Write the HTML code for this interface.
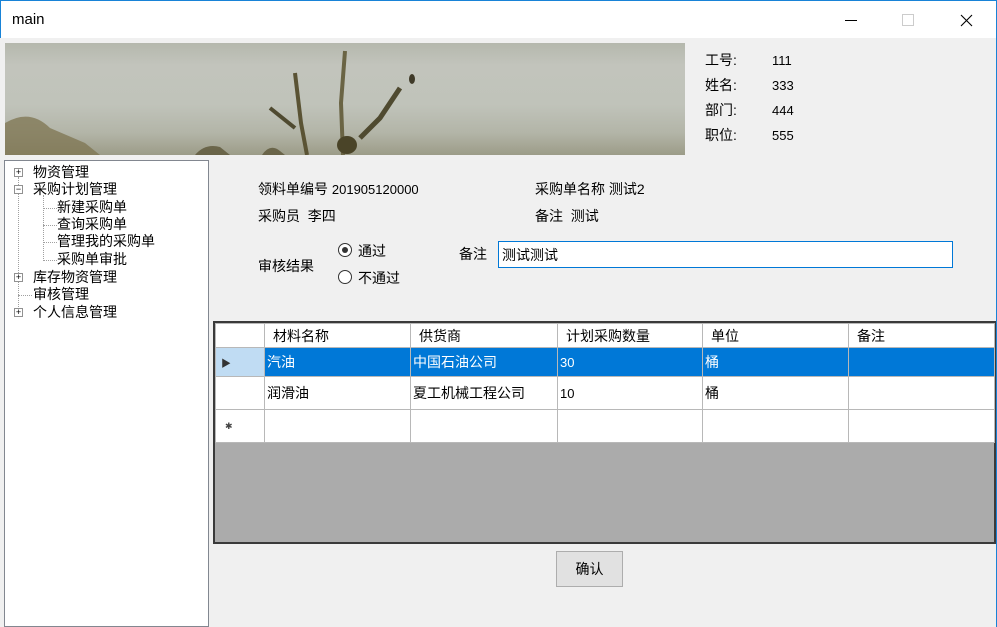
<!DOCTYPE html>
<html><head><meta charset="utf-8"><style>
*{margin:0;padding:0;box-sizing:border-box}
body{width:997px;height:627px;overflow:hidden;background:#f0f0f0;position:relative;font-family:"Liberation Sans","Noto Sans CJK SC",sans-serif;font-size:14px;color:#000}
.a{position:absolute;white-space:nowrap}
#title{left:0;top:0;width:997px;height:38px;background:#fff;border-top:1px solid #1883d7;border-left:1px solid #1883d7;border-right:1px solid #1883d7}
#pic{left:5px;top:43px;width:680px;height:112px;overflow:hidden;background:linear-gradient(180deg,#b5b8ad 0%,#c2c4bc 20%,#c0c3ba 55%,#b3b5a8 80%,#9c9c88 100%)}
.tree{left:4px;top:160px;width:205px;height:467px;background:#fff;border:1px solid #828790}
.ti{position:absolute;font-size:14px;line-height:17px}
.pm{position:absolute;width:9px;height:9px;border:1px solid #919191;background:#fff;font-size:9px;line-height:7px;text-align:center;color:#000}
.dot{position:absolute;border-color:#a0a0a0;border-style:dotted;border-width:0}
table{border-collapse:collapse;position:absolute;left:215px;top:323px;table-layout:fixed}
td{border:1px solid #b8b8b8;height:33px;padding:0 2px;font-size:14px;background:#fff;overflow:hidden}
tr.h td{height:24px;padding-left:8px}
tr.s td{background:#0078d7;color:#fff;height:29px}
</style></head><body>
<div class="a" id="title"><span class="a" style="left:11px;top:10px;font-size:15px">main</span>
<div class="a" style="left:844px;top:19px;width:12px;height:1px;background:#000"></div>
<div class="a" style="left:901px;top:13px;width:12px;height:12px;border:1px solid #ccc"></div>
<svg class="a" style="left:959px;top:13px" width="13" height="13"><path d="M1 1L12 12M12 1L1 12" stroke="#000" stroke-width="1.1"/></svg>
</div>
<div class="a" id="pic">
<svg width="680" height="112" style="position:absolute;left:0;top:0">
<path d="M0 80 Q25 65 45 85 L80 100 L95 112 L0 112Z" fill="#7d7450" opacity=".75"/>
<path d="M190 112 Q200 100 215 104 L225 112Z" fill="#5d5638" opacity=".8"/>
<path d="M257 112 Q265 100 275 108 L280 112Z" fill="#5d5638" opacity=".8"/>
<path d="M290 30 L296 80 L302 112" stroke="#5a5334" stroke-width="4" fill="none"/>
<path d="M340 8 L336 60 L338 112" stroke="#6a6444" stroke-width="4" fill="none"/>
<path d="M395 45 L375 75 L355 95" stroke="#4f4a30" stroke-width="5" fill="none"/>
<path d="M265 65 L290 85" stroke="#4f4a30" stroke-width="4" fill="none"/>
<ellipse cx="342" cy="102" rx="10" ry="9" fill="#4a4428"/>
<ellipse cx="407" cy="36" rx="3" ry="5" fill="#3f3a28"/>
</svg></div>
<div class="a" style="left:705px;top:48px;line-height:25px">工号:<br>姓名:<br>部门:<br>职位:</div>
<div class="a" style="left:772px;top:48px;line-height:25px;font-size:13px">111<br>333<br>444<br>555</div>

<div class="a tree">
<div class="dot" style="left:13px;top:16px;height:140px;border-left-width:1px"></div>
<div class="dot" style="left:38px;top:34px;height:66px;border-left-width:1px"></div>
<div class="dot" style="left:38px;top:47px;width:14px;border-top-width:1px"></div>
<div class="dot" style="left:38px;top:64px;width:14px;border-top-width:1px"></div>
<div class="dot" style="left:38px;top:81px;width:14px;border-top-width:1px"></div>
<div class="dot" style="left:38px;top:99px;width:14px;border-top-width:1px"></div>
<div class="dot" style="left:13px;top:134px;width:14px;border-top-width:1px"></div>
<div class="pm" style="left:9px;top:7px">+</div>
<div class="pm" style="left:9px;top:24px">−</div>
<div class="pm" style="left:9px;top:112px">+</div>
<div class="pm" style="left:9px;top:147px">+</div>
<div class="ti" style="left:28px;top:3px">物资管理</div>
<div class="ti" style="left:28px;top:20px">采购计划管理</div>
<div class="ti" style="left:52px;top:38px">新建采购单</div>
<div class="ti" style="left:52px;top:55px">查询采购单</div>
<div class="ti" style="left:52px;top:72px">管理我的采购单</div>
<div class="ti" style="left:52px;top:90px">采购单审批</div>
<div class="ti" style="left:28px;top:108px">库存物资管理</div>
<div class="ti" style="left:28px;top:125px">审核管理</div>
<div class="ti" style="left:28px;top:143px">个人信息管理</div>
</div>

<div class="a" style="left:258px;top:179px">领料单编号 <span style="font-size:13px">201905120000</span></div>
<div class="a" style="left:535px;top:179px">采购单名称 测试2</div>
<div class="a" style="left:258px;top:206px">采购员&nbsp; 李四</div>
<div class="a" style="left:535px;top:206px">备注&nbsp; 测试</div>
<div class="a" style="left:258px;top:256px">审核结果</div>
<div class="a" style="left:338px;top:243px;width:14px;height:14px;border:1px solid #333;border-radius:50%;background:#fff"><div style="position:absolute;left:3px;top:3px;width:6px;height:6px;border-radius:50%;background:#333"></div></div>
<div class="a" style="left:358px;top:241px">通过</div>
<div class="a" style="left:338px;top:270px;width:14px;height:14px;border:1px solid #333;border-radius:50%;background:#fff"></div>
<div class="a" style="left:358px;top:268px">不通过</div>
<div class="a" style="left:459px;top:244px">备注</div>
<div class="a" style="left:498px;top:241px;width:455px;height:27px;border:1px solid #0078d7;background:#fff;padding:3px 3px">测试测试</div>

<div class="a" style="left:213px;top:321px;width:783px;height:223px;background:#ababab;border:2px solid #3a3a3a"></div>
<table>
<colgroup><col style="width:49px"><col style="width:146px"><col style="width:147px"><col style="width:145px"><col style="width:146px"><col style="width:146px"></colgroup>
<tr class="h"><td></td><td>材料名称</td><td>供货商</td><td>计划采购数量</td><td>单位</td><td>备注</td></tr>
<tr class="s"><td style="background:#c0dcf3;color:#333;font-size:10px;padding-left:5px">▶</td><td>汽油</td><td>中国石油公司</td><td style="font-size:13px">30</td><td>桶</td><td></td></tr>
<tr><td></td><td>润滑油</td><td>夏工机械工程公司</td><td style="font-size:13px">10</td><td>桶</td><td></td></tr>
<tr><td style="font-size:9px;padding-left:9px;color:#444">✱</td><td></td><td></td><td></td><td></td><td></td></tr>
</table>

<div class="a" style="left:556px;top:551px;width:67px;height:36px;background:#e1e1e1;border:1px solid #adadad;text-align:center;line-height:34px">确认</div>
<div class="a" style="left:996px;top:0;width:1px;height:627px;background:#1883d7"></div>
</body></html>
